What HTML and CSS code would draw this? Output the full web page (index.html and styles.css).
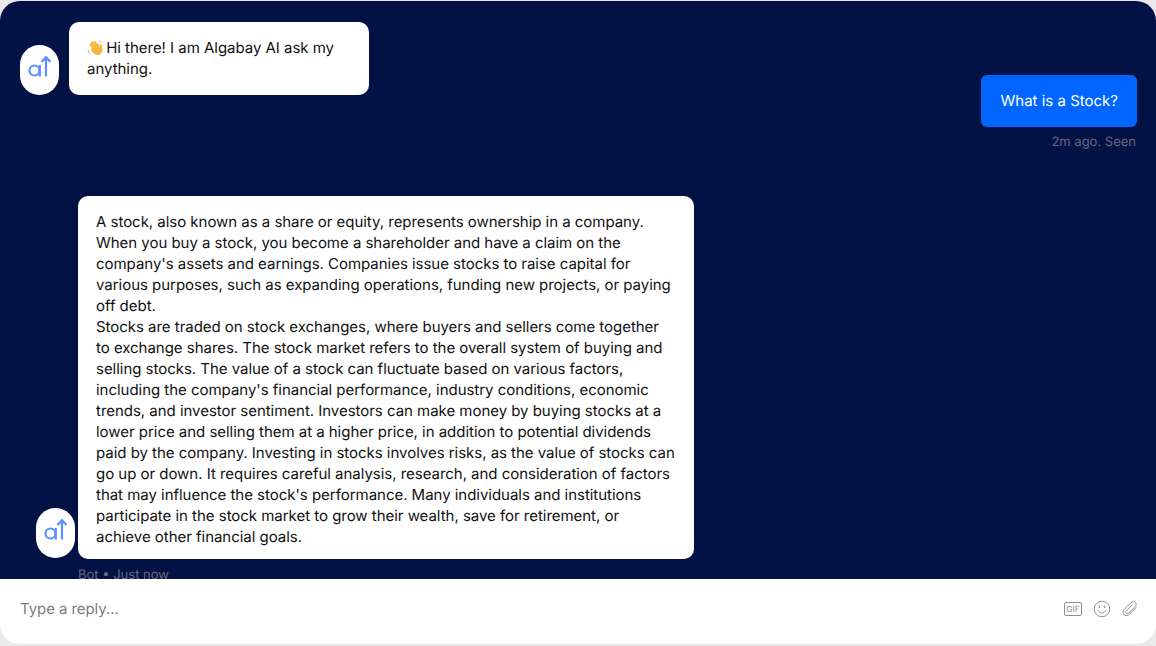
FILE: index.html
```html
<!DOCTYPE html>
<html lang="en">
<head>
    <meta charset="UTF-8">
    <meta name="viewport" content="width=device-width, initial-scale=1.0">
    <title>Algabay AI Chat</title>
    <link rel="stylesheet" href="styles.css">
</head>
<body>

<div class="chat">

    <div class="messages">

        <div class="row row-first">
            <div class="avatar">
                <svg width="39" height="50" viewBox="0 0 39 50" fill="none" stroke="#5c8fff" stroke-width="2.200">
                    <circle cx="14.500" cy="25.500" r="5"/>
                    <path d="M19.800 20v11.500"/>
                    <path d="M26 31.500V12.500M21.500 17l4.500-4.800 4.500 4.800"/>
                </svg>
            </div>
            <div class="bubble bubble-small">
                <svg class="wave" width="17" height="16" viewBox="0 0 17 16" fill="none" stroke-linecap="round">
                    <g stroke="#f5b83d">
                        <path d="M7.500 9 3.500 4.500" stroke-width="2.300"/>
                        <path d="M8.500 8 5 2.800" stroke-width="2.300"/>
                        <path d="M10 7 7.500 2" stroke-width="2.300"/>
                        <path d="M11.500 7.500 10 4" stroke-width="2.300"/>
                        <path d="M5 9.800 8.500 13" stroke-width="2.300"/>
                    </g>
                    <path d="M4.800 8.500 9 5l3.500 2 .5-2.500c.5-1 1.500-.7 1.700.3l.6 3.700c.4 3-1 6.500-4.800 6.500-2.500 0-4-1.500-6.500-6.500Z" fill="#f5b83d"/>
                    <path d="M1 10c.2 1.500.8 2.800 1.800 3.800M12 1c1.300.1 2.500.8 3.200 2" stroke="#a9b6cf"/>
                </svg>
                Hi there! I am Algabay AI ask my anything.
            </div>
        </div>

        <div class="row-user">
            <div class="bubble-user">What is a Stock?</div>
            <div class="meta">2m ago. Seen</div>
        </div>

        <div class="row row-answer">
            <div class="avatar">
                <svg width="39" height="50" viewBox="0 0 39 50" fill="none" stroke="#5c8fff" stroke-width="2.200">
                    <circle cx="14.500" cy="25.500" r="5"/>
                    <path d="M19.800 20v11.500"/>
                    <path d="M26 31.500V12.500M21.500 17l4.500-4.800 4.500 4.800"/>
                </svg>
            </div>
            <div class="bubble bubble-large">
                A stock, also known as a share or equity, represents ownership in a company. When you buy a stock, you become a shareholder and have a claim on the company's assets and earnings. Companies issue stocks to raise capital for various purposes, such as expanding operations, funding new projects, or paying off debt.<br>
                Stocks are traded on stock exchanges, where buyers and sellers come together to exchange shares. The stock market refers to the overall system of buying and selling stocks. The value of a stock can fluctuate based on various factors, including the company's financial performance, industry conditions, economic trends, and investor sentiment. Investors can make money by buying stocks at a lower price and selling them at a higher price, in addition to potential dividends paid by the company. Investing in stocks involves risks, as the value of stocks can go up or down. It requires careful analysis, research, and consideration of factors that may influence the stock's performance. Many individuals and institutions participate in the stock market to grow their wealth, save for retirement, or achieve other financial goals.
            </div>
        </div>
        <div class="meta meta-bot">Bot • Just now</div>

    </div>

    <div class="reply">
        <span class="placeholder">Type a reply...</span>
        <div class="tools">
            <svg width="18" height="14" viewBox="0 0 18 14" fill="none">
                <rect x=".5" y=".5" width="17" height="13" rx="1.500" stroke="#8f8f8f"/>
                <text x="9" y="10" text-anchor="middle" class="gif-label">GIF</text>
            </svg>
            <svg width="18" height="18" viewBox="0 0 18 18" fill="none" stroke="#8f8f8f">
                <circle cx="9" cy="9" r="7.800"/>
                <path d="M5.500 10.500C6.300 12.300 7.500 13 9 13s2.700-.7 3.500-2.500" stroke-linecap="round"/>
                <circle cx="6.500" cy="7" r=".6" fill="#8f8f8f"/>
                <circle cx="11.500" cy="7" r=".6" fill="#8f8f8f"/>
            </svg>
            <svg width="16" height="16" viewBox="0 0 16 16" fill="none" stroke="#8f8f8f" stroke-linecap="round">
                <path d="M14 6.500 7.500 13.300C5.800 15 3 15 1.800 13.600.5 12.200.7 10 2.300 8.300L9 1.800C10.300.5 12.200.4 13.300 1.400c1.200 1.200 1 2.900-.2 4.200L6.700 12c-.7.700-1.800.8-2.400.2-.7-.7-.6-1.700.1-2.500L10.500 3.700"/>
            </svg>
        </div>
    </div>

</div>

</body>
</html>
```

FILE: styles.css
```css
html, body {
    height: 100%;
}
body {
    font-family: Inter, "Liberation Sans", sans-serif;
    text-rendering: geometricPrecision;
    background-color: #e9e9e9;
    margin: 0;
    padding: 1px 0 2px;
    box-sizing: border-box;
    overflow: hidden;
}
.chat {
    height: 643px;
    border-radius: 20px;
    overflow: hidden;
    display: flex;
    flex-direction: column;
}
.messages {
    height: 578px;
    background-color: #021245;
    overflow: hidden;
    box-sizing: border-box;
    padding-top: 21px;
}
.row {
    display: flex;
    align-items: flex-end;
}
.row-first {
    margin-left: 20px;
    gap: 10px;
}
.row-answer {
    margin-left: 36px;
    margin-top: 46px;
    gap: 3px;
}
.row-answer .avatar {
    margin-bottom: 1px;
}
.avatar {
    width: 39px;
    height: 50px;
    border-radius: 20px;
    background-color: #fff;
    display: flex;
    align-items: center;
    justify-content: center;
    flex-shrink: 0;
}
.bubble {
    background-color: #fff;
    color: #111;
    font-size: 15px;
    line-height: 21px;
    letter-spacing: -0.03px;
    border-radius: 10px;
    padding: 15px 18px 16px;
    box-sizing: border-box;
}
.bubble-small {
    width: 300px;
}
.bubble-large {
    width: 616px;
    padding-bottom: 12px;
}
.wave {
    vertical-align: -3px;
    margin-right: -2px;
}
.row-user {
    margin: -20px 19px 0 0;
    display: flex;
    flex-direction: column;
    align-items: flex-end;
}
.bubble-user {
    background-color: #0066ff;
    color: #fff;
    font-size: 15px;
    line-height: 21px;
    padding: 15px 19px 16px 19.500px;
    border-radius: 6px;
}
.meta {
    color: #666a7d;
    font-size: 13px;
    line-height: 16px;
    margin-top: 7px;
    padding-right: 1px;
}
.meta-bot {
    margin: 8px 0 0 78px;
}
.reply {
    flex: 1;
    background-color: #fff;
    display: flex;
    align-items: center;
    justify-content: space-between;
    padding: 0 18px 6px 20px;
}
.placeholder {
    color: #7d7d7d;
    font-size: 15px;
    letter-spacing: -0.07px;
}
.tools {
    display: flex;
    align-items: center;
    gap: 11px;
}
.gif-label {
    font-family: Inter, "Liberation Sans", sans-serif;
    font-size: 8.500px;
    fill: #8f8f8f;
}
```
